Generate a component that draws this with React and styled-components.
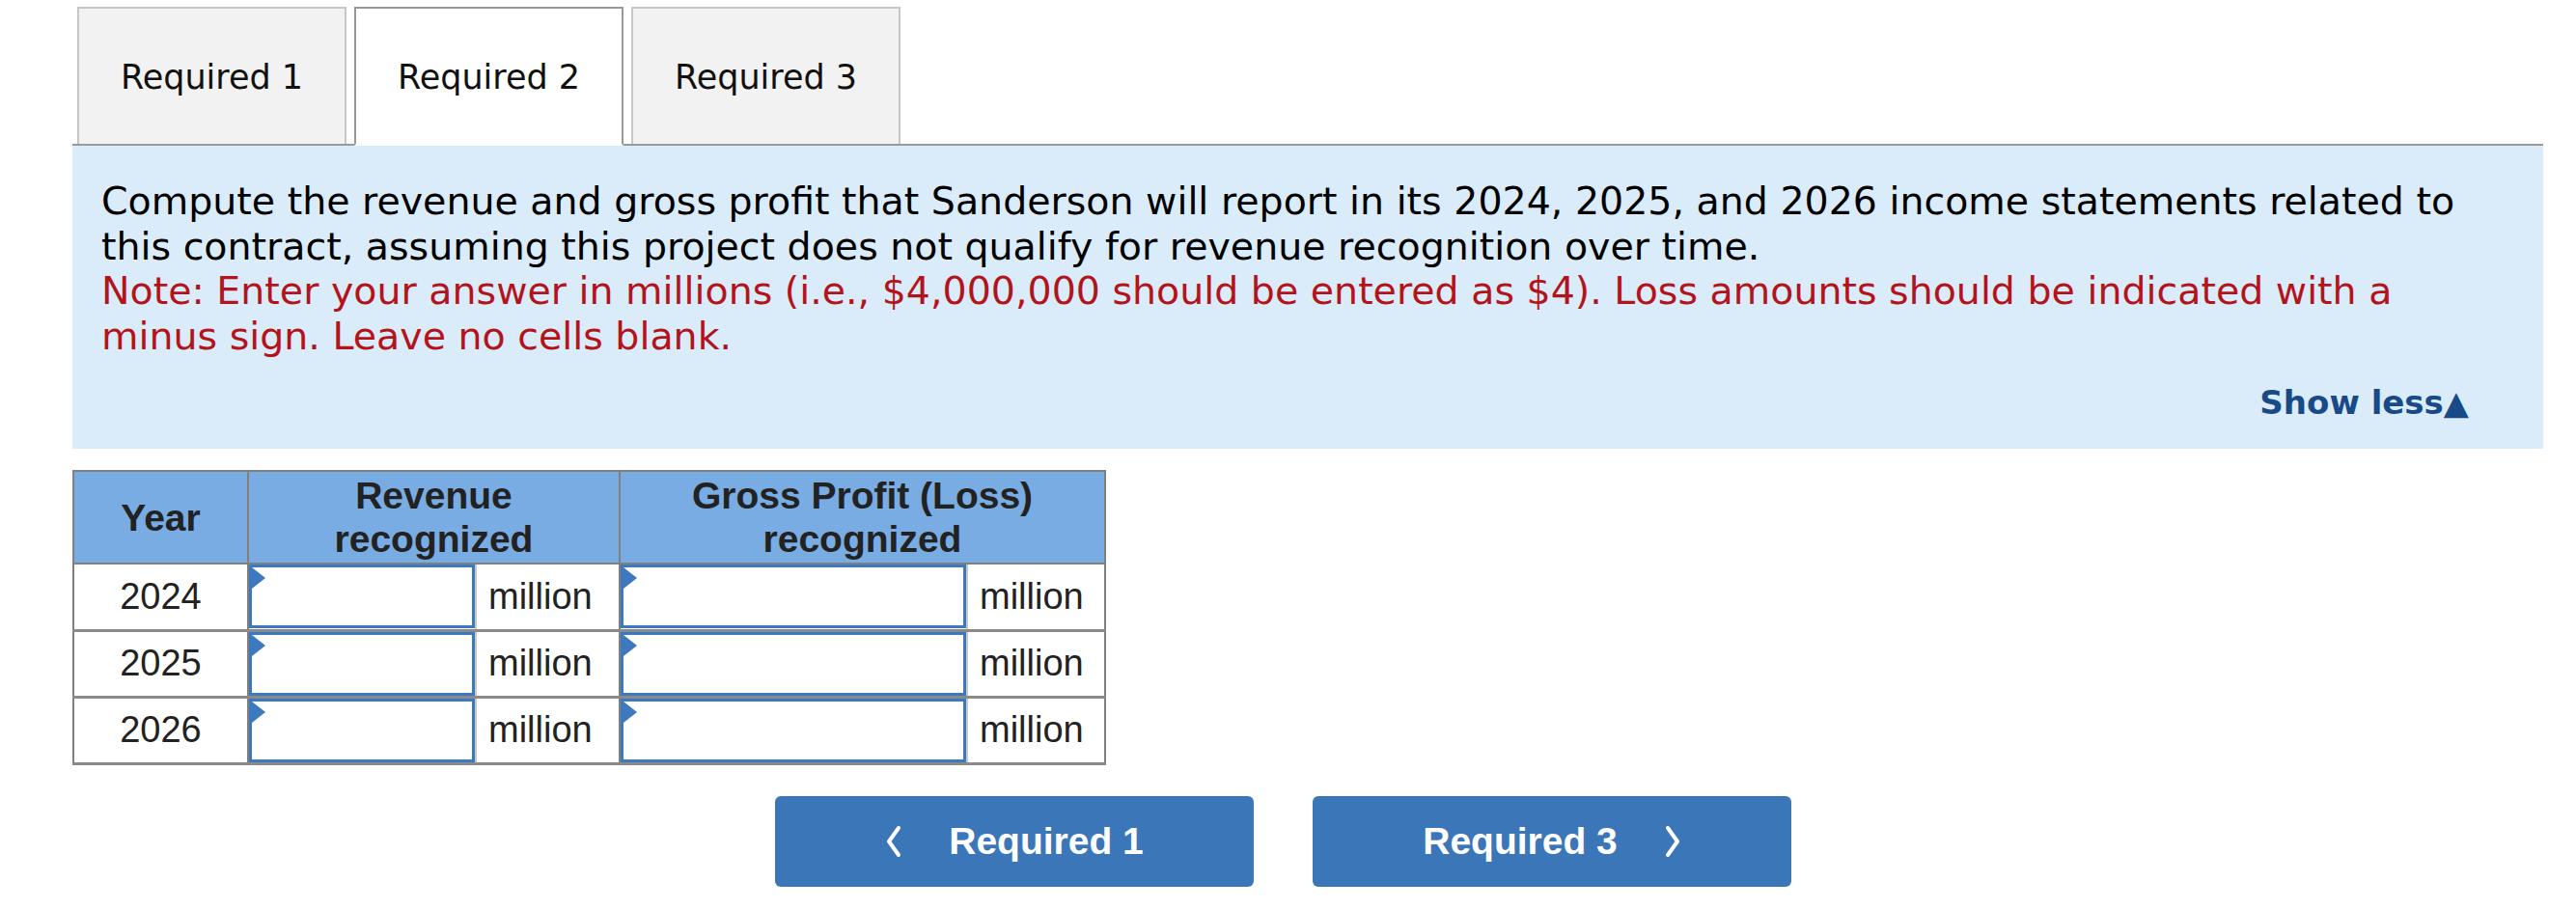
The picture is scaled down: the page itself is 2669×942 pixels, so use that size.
import React from "react";
import styled, { createGlobalStyle } from "styled-components";

const GlobalStyle = createGlobalStyle`
  body {
    margin: 0;
    background: #ffffff;
    font-family: "DejaVu Sans", Verdana, sans-serif;
  }
`;

const Page = styled.div`
  width: 2669px;
  padding: 7px 0 0 75px;
  box-sizing: border-box;
`;

const Content = styled.div`
  width: 2560px;
`;

const TabList = styled.div`
  display: flex;
  gap: 8px;
  padding-left: 5px;
  border-bottom: 2px solid #999999;
  height: 142px;
  box-sizing: content-box;
`;

const Tab = styled.div`
  width: 279px;
  box-sizing: border-box;
  display: flex;
  align-items: center;
  justify-content: center;
  font-family: "DejaVu Sans", Verdana, sans-serif;
  font-size: 35px;
  color: #111111;
  background: ${(p) => (p.$active ? "#ffffff" : "#f2f2f2")};
  border: 2px solid ${(p) => (p.$active ? "#999999" : "#c6c6c6")};
  border-bottom: ${(p) => (p.$active ? "2px solid #ffffff" : "none")};
  height: ${(p) => (p.$active ? "144px" : "142px")};
  padding-top: 2px;
  margin-bottom: ${(p) => (p.$active ? "-2px" : "0")};
  position: relative;
  z-index: 1;
`;

const Panel = styled.div`
  background: #daebf9;
  padding: 34px 60px 28px 30px;
  font-family: "DejaVu Sans", Verdana, sans-serif;
  font-size: 39.5px;
  line-height: 46.5px;
  color: #000000;
`;

const Note = styled.span`
  color: #b3141c;
`;

const ShowLess = styled.div`
  display: flex;
  justify-content: flex-end;
  align-items: center;
  margin-top: 26px;
  margin-right: 17px;
  font-weight: bold;
  font-size: 34px;
  line-height: 40px;
  color: #174a86;
`;

const Table = styled.table`
  margin-top: 22px;
  border-collapse: collapse;
  table-layout: fixed;
  width: 1069px;
  font-family: "Liberation Sans", Arial, sans-serif;
  font-size: 38px;
  color: #222222;
  border: 2px solid #7f7f7f;
`;

const HeadCell = styled.th`
  background: #78ace3;
  font-weight: bold;
  font-size: 39px;
  line-height: 45px;
  height: 94px;
  padding: 0;
  text-align: center;
  border: 2px solid #808080;
  color: #222222;
`;

const Row = styled.tr`
  height: 69px;
  border-bottom: 3px solid #8a8a8a;
`;

const YearCell = styled.td`
  text-align: center;
  padding: 0;
  border-right: 2px solid #808080;
`;

const InputCell = styled.td`
  padding: 0;
  position: relative;
  border-right: 2px solid #c8c8c8;
`;

const Field = styled.input`
  display: block;
  width: 100%;
  height: 66px;
  box-sizing: border-box;
  border: 3px solid #3d79bf;
  outline: none;
  background: #ffffff;
  margin: 0;
`;

const Marker = styled.span`
  position: absolute;
  left: 3px;
  top: 3px;
  width: 0;
  height: 0;
  border-top: 11px solid transparent;
  border-bottom: 11px solid transparent;
  border-left: 14px solid #3d79bf;
`;

const UnitCell = styled.td`
  padding: 0 0 0 12px;
  text-align: left;
  border-right: 2px solid #808080;
`;

const Nav = styled.div`
  display: flex;
  justify-content: center;
  gap: 61px;
  padding: 32px 10px 0 0;
  margin-left: -75px;
`;

const NavButton = styled.button`
  width: 496px;
  height: 94px;
  border: none;
  border-radius: 6px;
  background: #3b76b9;
  color: #ffffff;
  font-family: "Liberation Sans", Arial, sans-serif;
  font-weight: bold;
  font-size: 39px;
  display: flex;
  align-items: center;
  justify-content: center;
  gap: 48px;
  cursor: pointer;
`;

const Chevron = ({ dir }) => (
  <svg width="18" height="34" viewBox="0 0 18 34" fill="none">
    <polyline
      points={dir === "left" ? "14,3 4,17 14,31" : "4,3 14,17 4,31"}
      stroke="#ffffff"
      strokeWidth="4"
      strokeLinecap="round"
      strokeLinejoin="round"
    />
  </svg>
);

const years = ["2024", "2025", "2026"];

export default function App() {
  return (
    <Page>
      <GlobalStyle />
      <Content>
        <TabList>
          <Tab>Required 1</Tab>
          <Tab $active>Required 2</Tab>
          <Tab>Required 3</Tab>
        </TabList>
        <Panel>
          Compute the revenue and gross profit that Sanderson will report in its 2024, 2025, and
          2026 income statements related to this contract, assuming this project does not qualify
          for revenue recognition over time.
          <br />
          <Note>
            Note: Enter your answer in millions (i.e., $4,000,000 should be entered as $4). Loss
            amounts should be indicated with a minus sign. Leave no cells blank.
          </Note>
          <ShowLess>Show less▲</ShowLess>
        </Panel>
        <Table>
          <colgroup>
            <col style={{ width: 181 }} />
            <col style={{ width: 236 }} />
            <col style={{ width: 149 }} />
            <col style={{ width: 360 }} />
            <col style={{ width: 143 }} />
          </colgroup>
          <thead>
            <tr>
              <HeadCell>Year</HeadCell>
              <HeadCell colSpan={2}>
                Revenue
                <br />
                recognized
              </HeadCell>
              <HeadCell colSpan={2}>
                Gross Profit (Loss)
                <br />
                recognized
              </HeadCell>
            </tr>
          </thead>
          <tbody>
            {years.map((y) => (
              <Row key={y}>
                <YearCell>{y}</YearCell>
                <InputCell>
                  <Field type="text" />
                  <Marker />
                </InputCell>
                <UnitCell>million</UnitCell>
                <InputCell>
                  <Field type="text" />
                  <Marker />
                </InputCell>
                <UnitCell>million</UnitCell>
              </Row>
            ))}
          </tbody>
        </Table>
      </Content>
      <Nav>
        <NavButton>
          <Chevron dir="left" />
          Required 1
        </NavButton>
        <NavButton>
          Required 3
          <Chevron dir="right" />
        </NavButton>
      </Nav>
    </Page>
  );
}
